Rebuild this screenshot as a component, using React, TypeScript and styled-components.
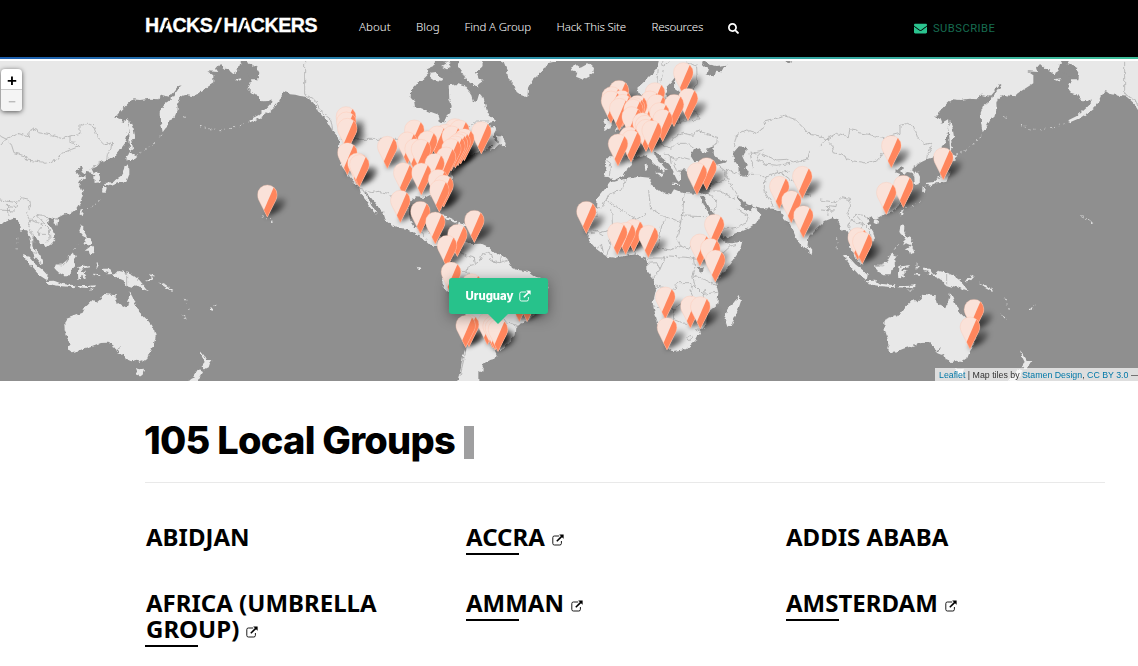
import React from "react";
import styled, { createGlobalStyle, css } from "styled-components";
import { FaEnvelope, FaSearch } from "react-icons/fa";

const Global = createGlobalStyle`
  * { box-sizing: border-box; }
  html, body { margin: 0; height: 666px; overflow: hidden; background: #fff; }
  body { font-family: "Noto Sans", sans-serif; color: #000; }
`;

const Header = styled.header`
  height: 57px;
  background: #000;
  display: flex;
  align-items: flex-start;
  padding-left: 145px;
`;
const Rainbow = styled.div`
  height: 4px;
  border-bottom: 2px solid #fff;
  background: linear-gradient(90deg, #1e5fae, #2a8fa8 45%, #3fc09a) padding-box;
`;
const Logo = styled.div`
  width: 214px;
  padding-top: 14px;
  font: bold 19.6px/22px "Liberation Sans", Arial, sans-serif;
  letter-spacing: -0.45px;
  color: #fff;
  -webkit-text-stroke: 0.3px #fff;
  white-space: nowrap;
`;
const CutA = styled.span`
  position: relative;
  &::after {
    content: "";
    position: absolute;
    left: 5px;
    top: 6px;
    width: 1.8px;
    height: 15px;
    background: #000;
    transform: skewX(-21deg);
  }
`;
const LogoSlash = styled.span`
  display: inline-block;
  margin: 0 3px 0 3px;
  transform: skewX(-12deg);
`;
const Nav = styled.nav`
  display: flex;
  width: 555px;
  padding-top: 18px;
`;
const NavLink = styled.a<{ $w: number; $ls: number }>`
  width: ${(p) => p.$w}px;
  font: 300 11.5px/18px "Noto Sans", sans-serif;
  letter-spacing: ${(p) => p.$ls}px;
  color: #fff;
  white-space: nowrap;
`;
const SearchIcon = styled(FaSearch)`
  margin-top: 5px;
  width: 11px;
  height: 11px;
  color: #fff;
`;
const Subscribe = styled.a`
  display: flex;
  align-items: center;
  gap: 6px;
  padding-top: 20px;
  font: 11.2px/17px Roboto, sans-serif;
  letter-spacing: 0.48px;
  color: #176c50;
  svg { width: 13px; height: 13px; color: #2bc48f; }
`;

const MapPane = styled.section`
  position: relative;
  height: 320px;
  overflow: hidden;
  background: #8f8f8f;
`;
const MapSvg = styled.svg`
  display: block;
`;
const ZoomBox = styled.div`
  position: absolute;
  left: 1px;
  top: 8px;
  width: 21px;
  height: 42px;
  border-radius: 4px;
  overflow: hidden;
  background: #fff;
  box-shadow: 0 1px 5px rgba(0, 0, 0, 0.65);
`;
const ZoomButton = styled.div<{ $off?: boolean }>`
  height: 21px;
  display: flex;
  align-items: center;
  justify-content: center;
  font: bold 17px/21px "Liberation Sans", sans-serif;
  padding: 3px 0 0 1px;
  border-bottom: 1px solid #ccc;
  ${(p) =>
    p.$off &&
    css`
      background: #f4f4f4;
      color: #bbb;
      border: 0;
      font-size: 13px;
      padding-top: 2px;
    `}
`;
const Popup = styled.div`
  position: absolute;
  left: 449px;
  top: 217px;
  width: 99px;
  height: 36px;
  border-radius: 3px;
  background: #27c28b;
  color: #fff;
  display: flex;
  align-items: center;
  justify-content: center;
  gap: 6px;
  font: 800 11.3px/16px Inter, sans-serif;
  box-shadow: 0 3px 14px rgba(0, 0, 0, 0.4);
  &::after {
    content: "";
    position: absolute;
    left: 39px;
    top: 36px;
    border: 10px solid transparent;
    border-top-color: #27c28b;
    border-bottom: 0;
  }
`;
const Attribution = styled.div`
  position: absolute;
  left: 935px;
  right: 0;
  bottom: 0;
  height: 13px;
  padding-left: 4px;
  overflow: hidden;
  white-space: nowrap;
  background: rgba(255, 255, 255, 0.7);
  font: 8.8px/14px "Liberation Sans", Arial, sans-serif;
  color: #333;
  a { color: #0078a8; }
`;

const Main = styled.main`
  padding: 36px 33px 0 145px;
`;
const Title = styled.h1`
  display: flex;
  align-items: center;
  gap: 9px;
  height: 65px;
  margin: 0 0 0 -1px;
  padding-bottom: 18px;
  font: 800 38px/47px Inter, sans-serif;
  letter-spacing: -0.73px;
  white-space: nowrap;
`;
const Cursor = styled.span`
  width: 10px;
  height: 33px;
  margin-top: 4px;
  background: #9f9fa0;
`;
const Rule = styled.div`
  height: 1px;
  background: #e9e9e9;
`;
const Groups = styled.div`
  display: grid;
  grid-template-columns: 321px 320px 319px;
  row-gap: 36px;
  padding-top: 42px;
`;
const Group = styled.div<{ $linked?: boolean }>`
  min-height: 30px;
  font: bold 24px/26px "Noto Sans", sans-serif;
  color: #000;
  &::after {
    content: "";
    display: block;
    width: 53px;
    height: 2px;
    margin-top: 2px;
    background: ${(p) => (p.$linked ? "#000" : "transparent")};
  }
`;
const GroupLine = styled.div<{ $ls: number }>`
  display: flex;
  align-items: center;
  gap: 7px;
  height: 26px;
  padding: 0 0 2px 1px;
  letter-spacing: ${(p) => p.$ls}px;
  white-space: nowrap;
  svg { margin-top: 5px; }
  ${Group}:not(:nth-child(3n + 1)) > & { padding-left: 0; }
`;

const External = ({ size = 12 }: { size?: number }) => (
  <svg width={size} height={size} viewBox="0 0 12 12" fill="none" stroke="currentColor">
    <path d="M7.2 2H2.4Q.8 2 .8 3.6v5.8Q.8 11 2.4 11h5.4q1.6 0 1.6-1.6V7" strokeWidth=".9" />
    <path d="M4.8 7.3L10 2.1" strokeWidth="1.6" />
    <path d="M7.2.4h4.4v4.4z" fill="currentColor" stroke="none" />
  </svg>
);

/* Land outlines; each sheet is drawn at three units per pixel. */
const americas = [
  "M-160 0L-165 20L-145 25L-130 35L-122 50L-125 70L-150 70L-148 80L-156 98L-145 110L-130 115L-120 130L-112 136L-94 135L-85 130L-87 142L-100 155L-125 178L-155 193L-150 199L-120 186L-90 166L-78 156L-65 140L-58 125L-50 107L-42 106L-30 115L-14 116L0 120L20 122L40 140L60 172L80 195L98 225L112 240L118 262L115 290L125 330L140 352L160 375L178 394L183 415L197 432L203 442L222 465L229 475L226 460L214 445L200 420L196 404L212 424L232 450L250 470L256 490L272 504L302 520L326 522L346 536L370 545L385 560L398 572L415 572L430 585L445 600L458 602L455 620L442 632L438 645L426 660L428 690L450 720L465 750L485 768L500 778L504 805L498 870L488 905L482 940L472 975L472 990L535 990L535 952L552 940L546 928L562 915L582 910L590 896L584 882L602 886L624 862L644 838L646 816L660 805L684 795L700 778L712 750L735 720L745 690L722 665L700 660L680 645L650 642L636 636L626 615L610 600L580 588L565 572L545 563L515 564L498 558L490 550L475 565L460 590L440 580L430 562L424 540L400 540L386 530L396 506L383 502L366 520L345 516L330 492L326 462L330 436L348 424L375 426L398 415L410 425L415 448L425 462L428 440L422 422L426 405L442 387L456 370L458 345L466 335L478 320L500 310L515 297L530 290L552 284L568 272L582 264L570 282L586 276L600 262L586 256L578 240L588 222L585 210L560 213L548 220L560 202L590 196L582 190L562 172L556 145L550 126L538 112L530 138L518 134L510 108L496 92L470 84L446 88L448 130L455 150L451 170L438 184L432 202L420 200L416 176L385 165L360 155L345 155L342 136L332 125L333 105L350 85L370 70L385 55L378 40L400 30L405 0Z",
  "M392 50L408 48L416 64L432 66L426 74L404 72L390 62Z",
  "M420 22L446 15L455 30L440 40L428 34Z",
  "M476 0L556 0L545 34L528 48L536 68L548 76L536 84L538 97L515 82L496 68L486 48L474 32Z",
  "M590 238L606 244L617 258L615 274L606 266L594 264Z",
  "M604 0L620 40L625 70L640 85L650 108L664 118L682 124L684 98L698 72L728 45L742 22L770 16L780 0Z",
  "M415 477L440 480L472 496L464 500L440 490Z",
  "M470 503L478 498L498 506L490 514L474 512Z",
  "M350 634L358 634L364 642L356 642Z",
];
const hudson = ["M405 24L425 14L440 22L420 34ZM455 18L470 12L472 40L462 50L448 44L462 34Z"];
const afroEurasia = [
  "M300 0L290 40L265 65L232 95L236 115L255 115L250 160L230 190L210 200L196 215L185 235L200 255L200 290L180 304L142 304L136 312L139 335L133 362L150 364L160 373L190 360L200 340L215 325L222 305L245 298L262 300L278 320L300 338L312 350L316 340L325 345L308 325L290 308L281 292L290 290L306 305L328 325L338 345L352 374L362 368L358 348L374 340L382 345L385 362L396 370L420 362L442 366L452 375L453 395L445 412L410 413L370 411L342 400L332 416L306 411L290 400L272 388L276 366L240 362L200 368L165 376L150 380L130 405L110 430L108 455L90 480L80 500L84 530L82 548L108 578L140 602L165 605L200 599L230 595L256 606L262 620L262 645L280 668L288 700L278 745L290 790L305 830L325 878L335 885L378 880L406 854L424 822L438 806L442 770L472 745L475 710L468 680L482 655L512 625L540 582L547 556L520 562L495 560L480 542L462 512L450 482L434 452L420 420L432 420L446 450L458 466L480 510L490 546L515 540L560 520L590 500L605 475L590 460L582 452L572 466L552 458L538 436L526 418L540 425L558 445L580 450L600 456L640 458L660 466L672 485L690 505L702 530L712 554L730 578L742 575L745 545L770 520L795 495L820 485L835 495L852 522L880 525L900 500L900 0Z",
  "M33 30L48 25L62 35L86 22L102 36L100 50L70 71L48 62L52 50L38 46Z",
  "M130 196L142 190L155 200L155 214L132 222L136 208Z",
  "M160 105L178 110L184 145L206 192L202 214L164 224L180 198L162 170Z",
  "M535 716L543 735L532 768L515 808L502 812L494 788L502 760L526 738Z",
  "M744 568L757 584L754 595L745 590Z",
  "M285 350L308 350L303 364Z",
  "M254 325L263 323L264 343L256 345Z",
  "M338 383L360 383L360 387L340 387Z",
];
const inland = [
  "M320 92L334 78L346 62L345 100L362 112L372 145L350 160L328 150L320 120Z",
  "M430 10L445 25L470 30L500 26L486 46L468 44L464 62L440 52L444 38L426 22Z",
  "M675 10L700 12L685 24Z",
  "M392 300L402 278L420 278L430 290L446 286L438 280L462 270L458 288L470 304L500 318L470 326L436 310L402 316Z",
  "M520 290L534 274L560 276L558 290L546 296L560 326L556 338L566 346L563 362L540 360L538 334L522 312Z",
  "M414 634L431 632L430 644L415 648Z",
];
const eastAsia = [
  "M-30 0L740 0L730 22L716 18L714 42L700 54L690 40L676 38L660 24L648 38L655 48L622 46L640 58L640 82L604 105L582 121L556 117L538 123L532 140L533 160L524 182L512 190L500 212L488 229L483 200L482 170L490 150L512 132L526 112L545 86L540 84L528 98L508 122L488 118L476 112L484 100L508 95L494 112L478 118L476 130L450 128L420 132L398 130L380 146L362 165L345 184L362 190L366 200L384 190L386 210L384 230L375 262L358 284L342 304L322 310L300 320L290 332L276 338L282 350L294 350L300 362L299 382L284 384L283 362L274 350L262 348L252 353L244 347L252 336L246 330L224 349L238 354L236 364L258 360L246 374L234 378L244 395L250 410L240 442L230 458L214 470L190 476L168 488L152 484L142 490L148 508L160 528L165 550L156 562L138 576L132 566L120 560L112 546L102 542L97 552L97 568L110 584L122 602L130 626L120 622L105 604L98 588L90 576L94 558L88 536L80 520L64 524L60 505L50 488L40 482L20 490L-10 500L-30 495Z",
  "M390 194L397 212L403 248L393 250L399 278L390 285L388 240L384 214Z",
  "M388 286L400 296L412 302L402 312L386 316L378 312Z",
  "M377 326L388 338L388 355L379 378L352 382L334 390L320 386L314 389L316 381L340 378L350 368L366 358L374 344Z",
  "M308 390L318 395L314 411L306 407Z",
  "M242 460L251 460L245 481L239 474Z",
  "M162 488L175 490L172 506L161 500Z",
  "M242 508L253 510L252 526L260 540L264 548L248 540L238 528Z",
  "M254 550L264 544L277 550L272 568L258 562L250 568Z",
  "M254 584L276 568L283 590L270 598L266 584Z",
  "M68 597L86 602L106 625L128 642L143 658L140 672L118 658L96 634Z",
  "M140 675L162 674L188 684L226 688L224 694L184 691L146 685Z",
  "M163 626L184 626L206 608L216 590L231 600L222 612L226 630L214 642L212 658L190 658L174 648L163 636Z",
  "M235 634L248 630L270 627L268 634L242 638L244 647L260 642L250 654L260 670L250 664L244 656L243 670L235 668L234 652Z",
  "M230 690L260 690L288 688L285 693L260 696L232 694Z",
  "M262 705L285 695L278 702Z",
  "M290 618L296 630L290 642Z",
  "M280 653L305 655L298 660L280 657Z",
  "M307 638L328 638L336 650L342 656L354 644L382 650L402 660L418 672L428 684L446 705L428 700L408 688L398 696L378 690L368 672L344 662L336 654L322 655L326 648L310 644Z",
  "M434 672L455 665L450 656L462 663L452 674L438 676Z",
  "M474 679L498 688L520 702L516 704L494 692Z",
  "M540 774L560 787L556 788Z",
  "M630 756L638 754L636 761L630 760ZM640 748L648 746L642 751Z",
  "M390 709L398 724L406 745L416 756L418 768L440 790L456 808L462 820L467 840L462 866L450 886L442 906L425 918L410 914L394 919L378 912L372 894L364 896L352 892L360 872L348 886L340 868L325 860L300 861L270 872L250 878L232 886L212 889L204 882L209 865L200 838L194 820L193 800L200 788L222 780L248 770L256 754L272 738L280 730L292 740L306 728L301 720L312 714L348 718L346 734L366 750L378 757L384 740Z",
  "M405 936L418 940L432 938L428 956L418 963L412 956Z",
  "M600 883L612 898L620 912L637 912L630 922L626 934L614 940L604 930L614 918L606 902Z",
  "M596 938L608 944L600 960L588 980L562 976L580 962Z",
  "M678 0L742 0L736 22L720 24L714 46L700 54L688 44L700 26Z",
  "M704 70L722 67L724 72L708 74Z",
  "M806 488L812 491L808 492ZM812 494L820 498L814 502Z",
];
const bering = ["M716 8L745 8L742 22L754 28L768 40L776 56L774 68L752 68L738 52L722 50L712 40L726 26Z"];
const islandChains = [
  "M408 298L440 280L458 266L486 236",
  "M600 208L628 218L660 221L700 216L746 198",
  "M552 182L566 187",
  "M244 462L280 450L305 430",
  "M50 544L52 586",
  "M556 728L570 768",
  "M784 482L814 494",
  "M204 604L238 562",
];
const americasBorders = [
  "M14 0V115L45 130L60 165L92 190L98 222",
  "M118 250H330L370 262L400 280L430 260L450 235L500 222L530 195L565 195",
  "M180 400L215 410L235 406L265 412L280 430L310 440",
  "M385 500L360 520L372 540M390 530L410 545M412 560L430 562",
  "M490 556L482 590L500 600L520 605L524 625L505 630L500 650L478 640L445 650L430 670",
  "M524 625L545 612L540 600L560 590L575 596L582 618L600 620L625 610",
  "M575 592L570 610L590 622M605 600L600 620",
  "M505 650L500 690L530 720L560 740L590 760L620 800L650 812M500 778L510 800L502 860L494 900L480 960",
];
const afroBorders = [
  "M300 0L310 30L330 15M295 40L290 80M310 40L300 90M380 20L410 30L412 80L390 120M340 210L370 195L420 192L412 170L395 160L400 150M355 180L362 205",
  "M330 260L350 240L370 232L400 238L412 222L440 235L472 245L470 265L450 272M300 262L330 280L350 262L380 262L400 275M325 300L345 310L370 305L390 310M340 320L350 345L378 340M310 290L330 300L334 325",
  "M520 275L530 235L560 222L590 232L615 212L612 198L645 190L675 180L705 190L720 205L745 232L770 235L794 248L768 268L748 290L742 310L700 318L680 310L650 312L625 302L596 290L570 292L580 335M794 248L840 232L870 235M794 248L820 280L840 310L870 315",
  "M580 290L610 280M600 290L590 310L620 325L650 328L690 322M565 355L600 355L615 365L612 405L640 450M565 362L550 360L520 348L498 340L505 375L525 405L535 420M615 365L650 350L690 345M650 340L690 370L710 380L730 405L760 425L810 440L830 435L832 452M745 420L775 440L815 450M815 450L818 480",
  "M470 325L495 345L500 370M460 405L480 405L525 430M455 382L480 378L495 368M440 410L470 430L465 470M490 520L530 514L560 500L565 480L530 460",
  "M136 310L152 322L148 360M195 300L225 305M372 410L368 480L440 482M368 470L362 500L350 548L362 570L385 580L400 560L420 540",
  "M266 405L272 460L310 480L362 500M200 370L188 395L142 420L142 435L230 490L258 472M108 455H125L142 425M108 455L112 480L80 490M155 460L158 520L120 530L100 520M110 578L125 565L130 590M140 600L150 570L145 550M225 595L230 560L245 535L300 540L305 510L315 490M300 540L295 575L330 582L365 570M265 606H315L325 600L390 605L410 610L430 590L470 605",
  "M262 622L290 620L300 640L280 665M300 640L315 605M288 690L345 700L350 680H390L400 700M400 605L405 640L398 660L405 690L430 715L475 708M390 700L398 722L370 740L345 758L278 750M345 758L340 790L325 830M370 740L425 735L435 700M340 790L375 805L410 780L425 790M385 842L394 838L399 846L390 854L383 849ZM410 820L418 818L417 827L409 825Z",
  "M450 480L470 520L485 540M480 540L512 570L530 565M512 570L480 600L470 640M400 660L430 670L470 690M84 530L110 528L130 540",
];
const asiaBorders = [
  "M-30 235L0 240L20 250L35 268L42 290L75 300L80 312L125 318L135 322L175 310L185 292L215 280L236 272L225 262L210 260L210 240L190 248L150 236L115 230L110 222L90 218L85 242L50 232L18 250L0 270",
  "M210 240L240 232L240 208L262 202L280 210L292 242L315 266L338 258L336 275L322 296L320 310M300 318L272 340M282 352L298 346",
  "M0 432L50 440L48 452L22 448L24 480M50 440L65 425L88 430L92 450L80 470L92 492L110 475L130 478L145 486",
  "M92 492L86 510L95 530L102 560M92 492L110 500L130 506L118 520M110 480L130 502L148 520L150 548L140 556M118 520L115 535L140 535",
  "M25 450L35 470M380 650V690M165 628L190 630L208 610M100 590L112 592M0 462L45 465",
];

const Shapes = ({ list, fill }: { list: string[]; fill: string }) => (
  <>{list.map((d) => <path key={d} d={d} fill={fill} />)}</>
);
const Borders = ({ list }: { list: string[] }) => (
  <g fill="none" stroke="#adadad" strokeWidth="2.4" strokeLinejoin="round">
    {list.map((d) => <path key={d} d={d} />)}
  </g>
);

type Sheet = { x: number; pins: [number, number][] };
const sheets: Sheet[] = [
  { x: 0, pins: [[802, 387]] },
  {
    x: 300,
    pins: [
      [138, 152], [139, 168], [142, 187], [142, 260], [172, 291], [178, 296], [262, 241], [343, 192], [322, 228],
      [344, 248], [363, 250], [382, 225], [412, 210], [435, 205], [465, 188], [478, 192], [455, 210], [493, 218],
      [482, 228], [474, 233], [466, 240], [454, 248], [438, 273], [404, 292], [544, 197], [310, 320], [364, 321],
      [414, 340], [431, 357], [418, 372], [301, 403], [361, 436], [406, 468], [523, 463], [472, 505], [441, 538],
      [453, 618], [515, 653], [658, 700], [682, 700], [507, 776], [497, 778], [562, 770], [578, 780], [585, 785],
      [594, 790],
    ],
  },
  {
    x: 560,
    pins: [
      [370, 20], [384, 97], [177, 73], [155, 92], [153, 105], [185, 103], [188, 115], [178, 127], [285, 80],
      [270, 105], [290, 115], [232, 118], [225, 125], [220, 130], [342, 115], [298, 140], [215, 152], [308, 160],
      [247, 170], [255, 178], [258, 190], [275, 193], [207, 212], [213, 222], [174, 234], [440, 305], [411, 320],
      [79, 436], [221, 490], [197, 499], [172, 500], [265, 508], [463, 475], [420, 534], [451, 547], [466, 582],
      [316, 693], [391, 720], [421, 722], [321, 785], [658, 361], [727, 331], [694, 404], [730, 449],
    ],
  },
  { x: 840, pins: [[154, 239], [310, 275], [139, 379], [190, 358], [53, 515], [67, 527], [402, 730], [390, 783]] },
];
const pins = sheets
  .flatMap((s) => s.pins.map(([x, y]) => ({ x: s.x + x / 3, y: 56 + y / 3 })))
  .sort((a, b) => a.y - b.y);

const WorldMap = () => (
  <MapSvg width="1138" height="320" viewBox="0 61 1138 320">
    <defs>
      <g id="world">
        <g transform="translate(560 56) scale(.33333)">
          <Shapes list={afroEurasia} fill="#e8e8e8" />
          <Shapes list={inland} fill="#8f8f8f" />
          <Borders list={afroBorders} />
        </g>
        <g transform="translate(820 56) scale(.33333)">
          <Shapes list={eastAsia} fill="#e8e8e8" />
          <Borders list={asiaBorders} />
          <g fill="none" stroke="#d4d4d4" strokeWidth="3" strokeDasharray="6 9 3 12">
            {islandChains.map((d) => <path key={d} d={d} />)}
          </g>
        </g>
        <g transform="translate(300 56) scale(.33333)">
          <Shapes list={americas} fill="#e8e8e8" />
          <Shapes list={hudson} fill="#8f8f8f" />
          <Borders list={americasBorders} />
        </g>
        <g transform="translate(0 56) scale(.33333)">
          <Shapes list={bering} fill="#8f8f8f" />
        </g>
      </g>
      {/* Roughens the coastlines */}
      <filter id="coast" filterUnits="userSpaceOnUse" x="0" y="61" width="1138" height="320" colorInterpolationFilters="sRGB">
        <feTurbulence type="fractalNoise" baseFrequency=".22" numOctaves="2" seed="4" />
        <feDisplacementMap in="SourceGraphic" scale="4.5" xChannelSelector="R" yChannelSelector="G" />
      </filter>
      <filter id="soft" x="-60%" y="-60%" width="220%" height="220%">
        <feGaussianBlur stdDeviation="2.4" />
      </filter>
      <linearGradient id="shade" x1="0" y1="1" x2="1" y2="0">
        <stop offset="0" stopColor="#000" stopOpacity=".8" />
        <stop offset=".5" stopColor="#000" stopOpacity=".55" />
        <stop offset="1" stopColor="#000" stopOpacity=".12" />
      </linearGradient>
      <path id="shadow" d="M-1 32L4 18Q12 11 18 14Q21 19 12 26Z" fill="url(#shade)" filter="url(#soft)" />
      <clipPath id="drop">
        <path d="M0 32.3L-8.7 14.8Q-9.8 12.3-9.8 9.8A9.8 9.8 0 0 1 9.8 9.8Q9.8 12.3 8.7 14.8Z" />
      </clipPath>
      <g id="pin">
        <g clipPath="url(#drop)">
          <path d="M-10 0H10V33H-10Z" fill="#fae2d9" />
          <path d="M7.4 0L-3.8 26V33H12V0Z" fill="#ff865d" />
        </g>
        <path
          d="M0 32L-8.7 14.8Q-9.8 12.3-9.8 9.8A9.8 9.8 0 0 1 9.8 9.8Q9.8 12.3 8.7 14.8Z"
          fill="none"
          stroke="#ffc4ae"
          strokeWidth=".6"
          opacity=".6"
        />
      </g>
    </defs>
    <g filter="url(#coast)">
      <use href="#world" x="-820" />
      <use href="#world" />
      <use href="#world" x="820" />
    </g>
    {pins.map((p, i) => <use key={i} href="#shadow" x={p.x} y={p.y} />)}
    {pins.map((p, i) => <use key={i} href="#pin" x={p.x} y={p.y} />)}
  </MapSvg>
);

const navItems = [
  { label: "About", w: 57, ls: 0.05 },
  { label: "Blog", w: 48.5, ls: 0 },
  { label: "Find A Group", w: 92, ls: -0.15 },
  { label: "Hack This Site", w: 95, ls: -0.17 },
  { label: "Resources", w: 76.5, ls: -0.25 },
];
const groups = [
  { lines: ["ABIDJAN"], linked: false },
  { lines: ["ACCRA"], linked: true },
  { lines: ["ADDIS ABABA"], linked: false },
  { lines: ["AFRICA (UMBRELLA", "GROUP)"], linked: true },
  { lines: ["AMMAN"], linked: true },
  { lines: ["AMSTERDAM"], linked: true },
];

export default function App() {
  return (
    <>
      <Global />
      <Header>
        <Logo>
          H<CutA>A</CutA>CKS<LogoSlash>/</LogoSlash>H<CutA>A</CutA>CKERS
        </Logo>
        <Nav>
          {navItems.map((n) => (
            <NavLink key={n.label} $w={n.w} $ls={n.ls}>{n.label}</NavLink>
          ))}
          <SearchIcon />
        </Nav>
        <Subscribe><FaEnvelope />SUBSCRIBE</Subscribe>
      </Header>
      <Rainbow />
      <MapPane>
        <WorldMap />
        <ZoomBox>
          <ZoomButton>+</ZoomButton>
          <ZoomButton $off>−</ZoomButton>
        </ZoomBox>
        <Popup>Uruguay <External size={12} /></Popup>
        <Attribution>
          <a>Leaflet</a> | Map tiles by <a>Stamen Design</a>, <a>CC BY 3.0</a> —
        </Attribution>
      </MapPane>
      <Main>
        <Title>105 Local Groups<Cursor /></Title>
        <Rule />
        <Groups>
          {groups.map((g) => (
            <Group key={g.lines[0]} $linked={g.linked}>
              {g.lines.map((l, i) => (
                <GroupLine key={l} $ls={0}>
                  {l}
                  {g.linked && i === g.lines.length - 1 && <External />}
                </GroupLine>
              ))}
            </Group>
          ))}
        </Groups>
      </Main>
    </>
  );
}
